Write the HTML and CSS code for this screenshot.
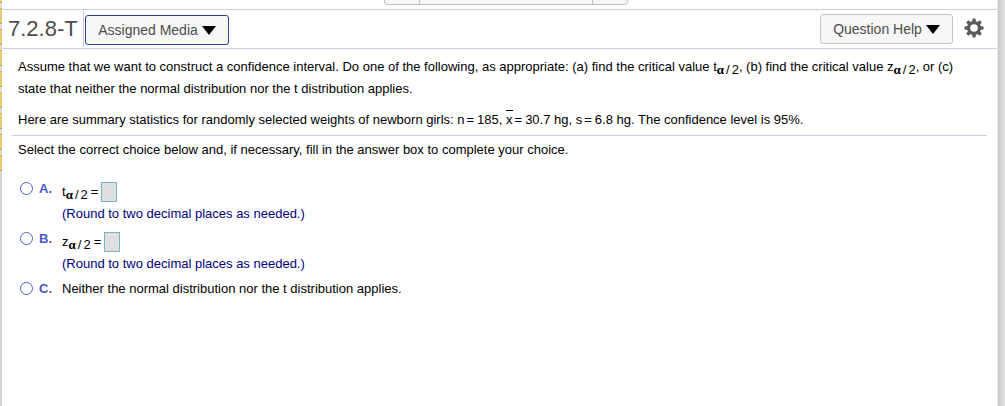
FILE: index.html
```html
<!DOCTYPE html>
<html lang="en">
<head>
<meta charset="utf-8">
<title>7.2.8-T</title>
<link rel="stylesheet" href="styles.css">
</head>
<body>
<div class="page">
  <div class="rail"></div>
  <main class="panel">
    <div class="pager"><span class="pager-end"></span><span class="pager-mid"></span><span class="pager-end"></span></div>
    <header class="toolbar">
      <h1 class="title">7.2.8-T</h1>
      <button class="btn btn-media" type="button">Assigned Media <svg class="caret" viewBox="0 0 14 9"><path d="M0 0h14L7 9z"/></svg></button>
      <button class="btn btn-help" type="button">Question Help <svg class="caret" viewBox="0 0 14 9"><path d="M0 0h14L7 9z"/></svg></button>
      <button class="gear" type="button" aria-label="Settings">
        <svg viewBox="0 0 20 20"><g fill="#5c5c5c"><g id="teeth"><path d="M8 4 8.500 .5h3L12 4v12l-.5 3.500h-3L8 16z"/><path d="M16 8l3.500.5v3L16 12H4l-3.500-.5v-3L4 8z"/></g><use href="#teeth" transform="rotate(45 10 10)"/><circle cx="10" cy="10" r="7"/></g><circle cx="10" cy="10" r="3.800" fill="#fff"/></svg>
      </button>
    </header>
    <section class="problem">
      <p class="intro">Assume that we want to construct a confidence interval. Do one of the following, as appropriate: (a) find the critical value t<span class="sub"><span class="alpha">α</span><span class="slash">/</span>2</span>, (b) find the critical value z<span class="sub"><span class="alpha">α</span><span class="slash">/</span>2</span>, or (c) state that neither the normal distribution nor the t distribution applies.</p>
      <p class="stats">Here are summary statistics for randomly selected weights of newborn girls: n<span class="eq">=</span>185, <span class="bar">x</span><span class="eq">=</span>30.7 hg, s<span class="eq">=</span>6.8 hg. The confidence level is 95%.</p>
    </section>
    <section class="answer">
      <p class="prompt">Select the correct choice below and, if necessary, fill in the answer box to complete your choice.</p>
      <div class="choice">
        <input class="radio" type="radio" name="choice" id="a"><label class="letter" for="a">A.</label>
        <div class="body">
          <div class="formula"><label for="ta">t<span class="sub"><span class="alpha">α</span><span class="slash">/</span>2</span><span class="eq">=</span></label><input class="box" id="ta" type="text"></div>
          <div class="note">(Round to two decimal places as needed.)</div>
        </div>
      </div>
      <div class="choice">
        <input class="radio" type="radio" name="choice" id="b"><label class="letter" for="b">B.</label>
        <div class="body">
          <div class="formula"><label for="zb">z<span class="sub"><span class="alpha">α</span><span class="slash">/</span>2</span><span class="eq">=</span></label><input class="box" id="zb" type="text"></div>
          <div class="note">(Round to two decimal places as needed.)</div>
        </div>
      </div>
      <div class="choice">
        <input class="radio" type="radio" name="choice" id="c"><label class="letter" for="c">C.</label>
        <label class="body" for="c">Neither the normal distribution nor the t distribution applies.</label>
      </div>
    </section>
  </main>
  <div class="edge"></div>
</div>
</body>
</html>
```

FILE: styles.css
```css
* { box-sizing: border-box; }
body {
  margin: 0;
  background: #fff;
  color: #000;
  font: 13px/22px "Liberation Sans", Arial, sans-serif;
}
p, h1 { margin: 0; }
.page { display: flex; min-height: 100vh; }
.rail {
  width: 2px;
  background:
    linear-gradient(transparent 171px, #d4d4d4 171px),
    repeating-linear-gradient(#d9b13c 0 1px, #e8ca70 1px 15px, #d0a42c 15px 16px, #dcdce4 16px 21px) 0 -13px / 100% 200%;
}
.panel { flex: 1; min-width: 0; }
.edge {
  width: 8px;
  border-left: 1px solid #ececec;
  background: linear-gradient(90deg, #c8c8c8, #e2e2e2);
}
.pager {
  display: flex;
  width: 244px;
  height: 5px;
  margin: 0 auto 4px 382px;
  border: 1px solid #c4c4c4;
  border-top: 0;
  border-radius: 0 0 4px 4px;
  background: #f7f7f7;
}
.pager-end { width: 34px; }
.pager-mid { flex: 1; border: solid #c4c4c4; border-width: 0 1px; }
.toolbar {
  display: flex;
  align-items: center;
  height: 40px;
  border: solid #c8cedb;
  border-width: 1px 0;
}
.title {
  align-self: stretch;
  width: 82px;
  margin: 1px 1px 1px 0;
  padding-left: 6px;
  border-right: 1px solid #c8c8d0;
  color: #4d4d4d;
  font-size: 22px;
  font-weight: 400;
  line-height: 35px;
}
.btn {
  display: flex;
  align-items: center;
  justify-content: center;
  gap: 4px;
  height: 30px;
  padding: 0;
  border: 1px solid #c4c4c4;
  border-radius: 3px;
  background: #f7f7f7;
  color: #4d4d4d;
  font: 14px/20px "Liberation Sans", Arial, sans-serif;
}
.btn-media { width: 144px; margin-top: 2px; border-color: #2f3e92; }
.btn-help { width: 133px; margin-left: auto; }
.caret { width: 14px; height: 9px; fill: #000; }
.gear {
  display: flex;
  margin: 0 13px 2px 11px;
  padding: 0;
  border: 0;
  background: none;
}
.gear svg { width: 20px; height: 20px; }
.problem {
  margin: 0 24px 0 16px;
  padding: 7px 0 4px;
}
.stats { margin-top: 9px; }
.sub {
  display: inline-block;
  height: 12px;
  line-height: 12px;
  vertical-align: -3px;
}
.alpha { font: 700 13px/12px "Liberation Serif", serif; }
.slash { margin: 0 2px; }
.eq { margin: 0 3px 0 2px; }
.bar {
  padding-top: 1px;
  border-top: 1px solid #000;
}
.answer {
  margin: 0 10px;
  padding: 3px 0 0 6px;
  border-top: 1px solid #c8cedb;
}
.prompt { margin-bottom: 17px; }
.choice {
  display: flex;
  align-items: flex-start;
  margin-bottom: 3px;
}
.radio {
  appearance: none;
  width: 13px;
  height: 13px;
  margin: 4px 6px 0 2px;
  border: 1px solid #4a60cc;
  border-radius: 50%;
  background: #fff;
}
.letter {
  width: 23px;
  color: #4a58cc;
  font-weight: 700;
}
.formula {
  display: flex;
  align-items: center;
  height: 25px;
  padding-top: 2px;
}
.formula .eq { margin-left: 3px; }
.box {
  width: 16px;
  height: 20px;
  padding: 0;
  border: 1px solid #74b4c8;
  background: #dedede;
}
.note { color: #000080; }
```
